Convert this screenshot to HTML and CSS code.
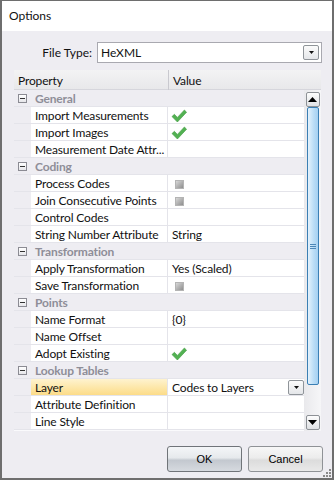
FILE: index.html
```html
<!DOCTYPE html>
<html lang="en">
<head>
  <meta charset="UTF-8" />
  <title>Options</title>
  <link rel="stylesheet" href="styles.css">
</head>
<body>
  <div class="window">
    <div class="titlebar">Options</div>
    <div class="content">
      <div class="field">
        <span class="field-label">File Type:</span>
        <div class="combo">
          <span class="combo-text">HeXML</span>
          <span class="drop"><svg width="5" height="3" viewBox="0 0 5 3"><path d="M0 0h5L2.5 3z" fill="#111"/></svg></span>
        </div>
      </div>

      <div class="grid">
        <div class="grid-head">
          <div class="hcell">Property</div>
          <div class="hcell hvalue">Value</div>
        </div>
        <div class="grid-body">
          <div class="rows">
            <div class="cat"><span class="gutter"><span class="toggle"></span></span><span class="cat-name">General</span></div>
            <div class="row"><span class="gutter"></span><span class="prop">Import Measurements</span><span class="val"><svg class="check" width="16" height="14" viewBox="0 0 16 14"><path d="M1 7.6 3.4 5.3 6.4 8.4 13.4 1 15.6 3.2 6.4 13z" fill="#52b152" stroke="#3f9a3f" stroke-width=".6"/></svg></span></div>
            <div class="row"><span class="gutter"></span><span class="prop">Import Images</span><span class="val"><svg class="check" width="16" height="14" viewBox="0 0 16 14"><path d="M1 7.6 3.4 5.3 6.4 8.4 13.4 1 15.6 3.2 6.4 13z" fill="#52b152" stroke="#3f9a3f" stroke-width=".6"/></svg></span></div>
            <div class="row"><span class="gutter"></span><span class="prop">Measurement Date Attr...</span><span class="val"></span></div>

            <div class="cat"><span class="gutter"><span class="toggle"></span></span><span class="cat-name">Coding</span></div>
            <div class="row"><span class="gutter"></span><span class="prop">Process Codes</span><span class="val"><span class="box"></span></span></div>
            <div class="row"><span class="gutter"></span><span class="prop">Join Consecutive Points</span><span class="val"><span class="box"></span></span></div>
            <div class="row"><span class="gutter"></span><span class="prop">Control Codes</span><span class="val"></span></div>
            <div class="row"><span class="gutter"></span><span class="prop">String Number Attribute</span><span class="val">String</span></div>

            <div class="cat"><span class="gutter"><span class="toggle"></span></span><span class="cat-name">Transformation</span></div>
            <div class="row"><span class="gutter"></span><span class="prop">Apply Transformation</span><span class="val">Yes (Scaled)</span></div>
            <div class="row"><span class="gutter"></span><span class="prop">Save Transformation</span><span class="val"><span class="box"></span></span></div>

            <div class="cat"><span class="gutter"><span class="toggle"></span></span><span class="cat-name">Points</span></div>
            <div class="row"><span class="gutter"></span><span class="prop">Name Format</span><span class="val">{0}</span></div>
            <div class="row"><span class="gutter"></span><span class="prop">Name Offset</span><span class="val"></span></div>
            <div class="row"><span class="gutter"></span><span class="prop">Adopt Existing</span><span class="val"><svg class="check" width="16" height="14" viewBox="0 0 16 14"><path d="M1 7.6 3.4 5.3 6.4 8.4 13.4 1 15.6 3.2 6.4 13z" fill="#52b152" stroke="#3f9a3f" stroke-width=".6"/></svg></span></div>

            <div class="cat"><span class="gutter"><span class="toggle"></span></span><span class="cat-name">Lookup Tables</span></div>
            <div class="row selected"><span class="gutter"></span><span class="prop">Layer</span><span class="val val-combo">Codes to Layers<span class="drop small"><svg width="5" height="3" viewBox="0 0 5 3"><path d="M0 0h5L2.5 3z" fill="#111"/></svg></span></span></div>
            <div class="row"><span class="gutter"></span><span class="prop">Attribute Definition</span><span class="val"></span></div>
            <div class="row"><span class="gutter"></span><span class="prop">Line Style</span><span class="val"></span></div>
          </div>
          <div class="scroll">
            <span class="sbtn"><svg width="9" height="5" viewBox="0 0 9 5"><path d="M0 5h9L4.5 0z" fill="#000"/></svg></span>
            <span class="thumb"><span class="grip-lines"></span></span>
            <span class="track"></span>
            <span class="sbtn"><svg width="9" height="5" viewBox="0 0 9 5"><path d="M0 0h9L4.5 5z" fill="#000"/></svg></span>
          </div>
        </div>
      </div>

      <div class="buttons">
        <button class="btn btn-default">OK</button>
        <button class="btn">Cancel</button>
      </div>
    </div>
    <svg class="resize" width="8" height="8" viewBox="0 0 8 8" fill="#8a8a8a"><rect x="6" y="0" width="2" height="2"/><rect x="3" y="3" width="2" height="2"/><rect x="6" y="3" width="2" height="2"/><rect x="0" y="6" width="2" height="2"/><rect x="3" y="6" width="2" height="2"/><rect x="6" y="6" width="2" height="2"/></svg>
  </div>
</body>
</html>
```

FILE: styles.css
```css
* { box-sizing: border-box; }
body {
  margin: 0;
  font-family: Lato, "Open Sans", sans-serif;
  font-size: 12px;
  color: #111;
}
.window {
  position: relative;
  width: 334px;
  height: 480px;
  border: 2px solid #6e6e6e;
  border-top-width: 1px;
  background: #eeedf2;
  display: flex;
  flex-direction: column;
}
.titlebar {
  height: 30px;
  background: #fff;
  padding-left: 7px;
  line-height: 30px;
  font-size: 12px;
}
.content {
  flex: 1;
  padding: 11px 11px 0 12px;
  display: flex;
  flex-direction: column;
}

/* file type */
.field { display: flex; align-items: center; height: 20px; }
.field-label { width: 78px; text-align: right; margin-right: 5px; }
.combo {
  flex: 1;
  margin-right: -1px;
  height: 21px;
  border: 1px solid #a9a9b0;
  background: #fff;
  display: flex;
  align-items: center;
  justify-content: space-between;
  padding: 0 2px 0 3px;
}
.drop {
  width: 16px;
  height: 15px;
  border: 1px solid #8f9499;
  border-radius: 2px;
  background: linear-gradient(#fbfbfb, #e4e6e9);
  display: flex;
  align-items: center;
  justify-content: center;
}

/* property grid */
.grid { margin-top: 8px; letter-spacing: -0.15px; }
.grid-head {
  display: grid;
  grid-template-columns: 154px 1fr;
  height: 20px;
  background: linear-gradient(#f3f3f4, #e8e8ea);
  border-bottom: 1px solid #d6d6dc;
}
.hcell { padding: 1px 0 0 4px; line-height: 19px; }
.hvalue { border-left: 1px solid #c9c9cf; }
.grid-body { display: flex; }
.rows { width: 290px; border-bottom: 1px solid #fafafc; }
.row, .cat {
  display: grid;
  height: 17px;
  border-bottom: 1px solid #e4e4ea;
}
.row { grid-template-columns: 17px 136px 137px; }
.cat { grid-template-columns: 17px 1fr; }
.gutter { display: flex; align-items: center; padding-left: 4px; }
.toggle {
  position: relative;
  width: 9px;
  height: 9px;
  border: 1px solid #8b8b93;
  background: linear-gradient(#fff, #e6e6ea);
}
.toggle::after {
  content: "";
  position: absolute;
  left: 1px;
  top: 3px;
  width: 5px;
  height: 1px;
  background: #333;
}
.cat-name {
  padding: 1px 0 0 4px;
  line-height: 15px;
  font-weight: 700;
  color: #8e8e98;
}
.prop, .val {
  background: #fff;
  white-space: nowrap;
  overflow: hidden;
}
.prop { padding: 1px 0 0 4px; line-height: 15px; }
.val {
  border-left: 1px solid #e4e4ea;
  padding: 2px 0 0 4px;
  line-height: 14px;
  display: flex;
  align-items: flex-start;
}
.selected .prop { background: linear-gradient(#fef3cf, #fcdc88); }
.val-combo { justify-content: space-between; }
.drop.small { width: 16px; height: 15px; margin-top: -1px; }
.check { margin-left: -1px; }
.box {
  width: 9px;
  height: 9px;
  margin: 3px 0 0 3px;
  border: 1px solid #b4b4b4;
  background: linear-gradient(135deg, #d8d8d8, #8e8e8e);
}

/* scrollbar */
.scroll {
  width: 17px;
  display: flex;
  flex-direction: column;
  align-items: center;
  padding: 2px 0 1px;
  background: linear-gradient(90deg, #e9e9ec, #f6f6f8);
}
.sbtn {
  width: 14px;
  height: 15px;
  border: 1px solid #8d9196;
  border-radius: 2px;
  background: linear-gradient(#fdfdfd, #dfe1e4);
  display: flex;
  align-items: center;
  justify-content: center;
}
.thumb {
  width: 12px;
  height: 278px;
  border: 1px solid #3b7fb4;
  border-radius: 2px;
  background: linear-gradient(90deg, #e4f2fc, #b9dcf6 60%, #a5d0f1);
  display: flex;
  align-items: center;
  justify-content: center;
}
.grip-lines {
  width: 6px;
  height: 5px;
  border-top: 1px solid #4d87b8;
  border-bottom: 1px solid #4d87b8;
  position: relative;
}
.grip-lines::after {
  content: "";
  position: absolute;
  left: 0;
  right: 0;
  top: 1px;
  border-top: 1px solid #4d87b8;
}
.track { flex: 1; }

/* buttons */
.buttons {
  display: flex;
  justify-content: flex-end;
  gap: 6px;
  margin: 15px -2px 0 0;
}
.btn {
  width: 75px;
  height: 26px;
  border: 1px solid #8f9296;
  border-radius: 3px;
  font-family: "Liberation Sans", Arial, sans-serif;
  font-size: 11px;
  color: #000;
  background: linear-gradient(#f7f7f7, #ececec 45%, #dcdcdc 55%, #e9e9e9);
}
.btn-default {
  border-color: #707479;
  background: linear-gradient(#f4f6f8, #e6e9ec 45%, #c3c8cf 55%, #d6dadf);
}
.resize { position: absolute; right: 1px; bottom: 1px; }
```
